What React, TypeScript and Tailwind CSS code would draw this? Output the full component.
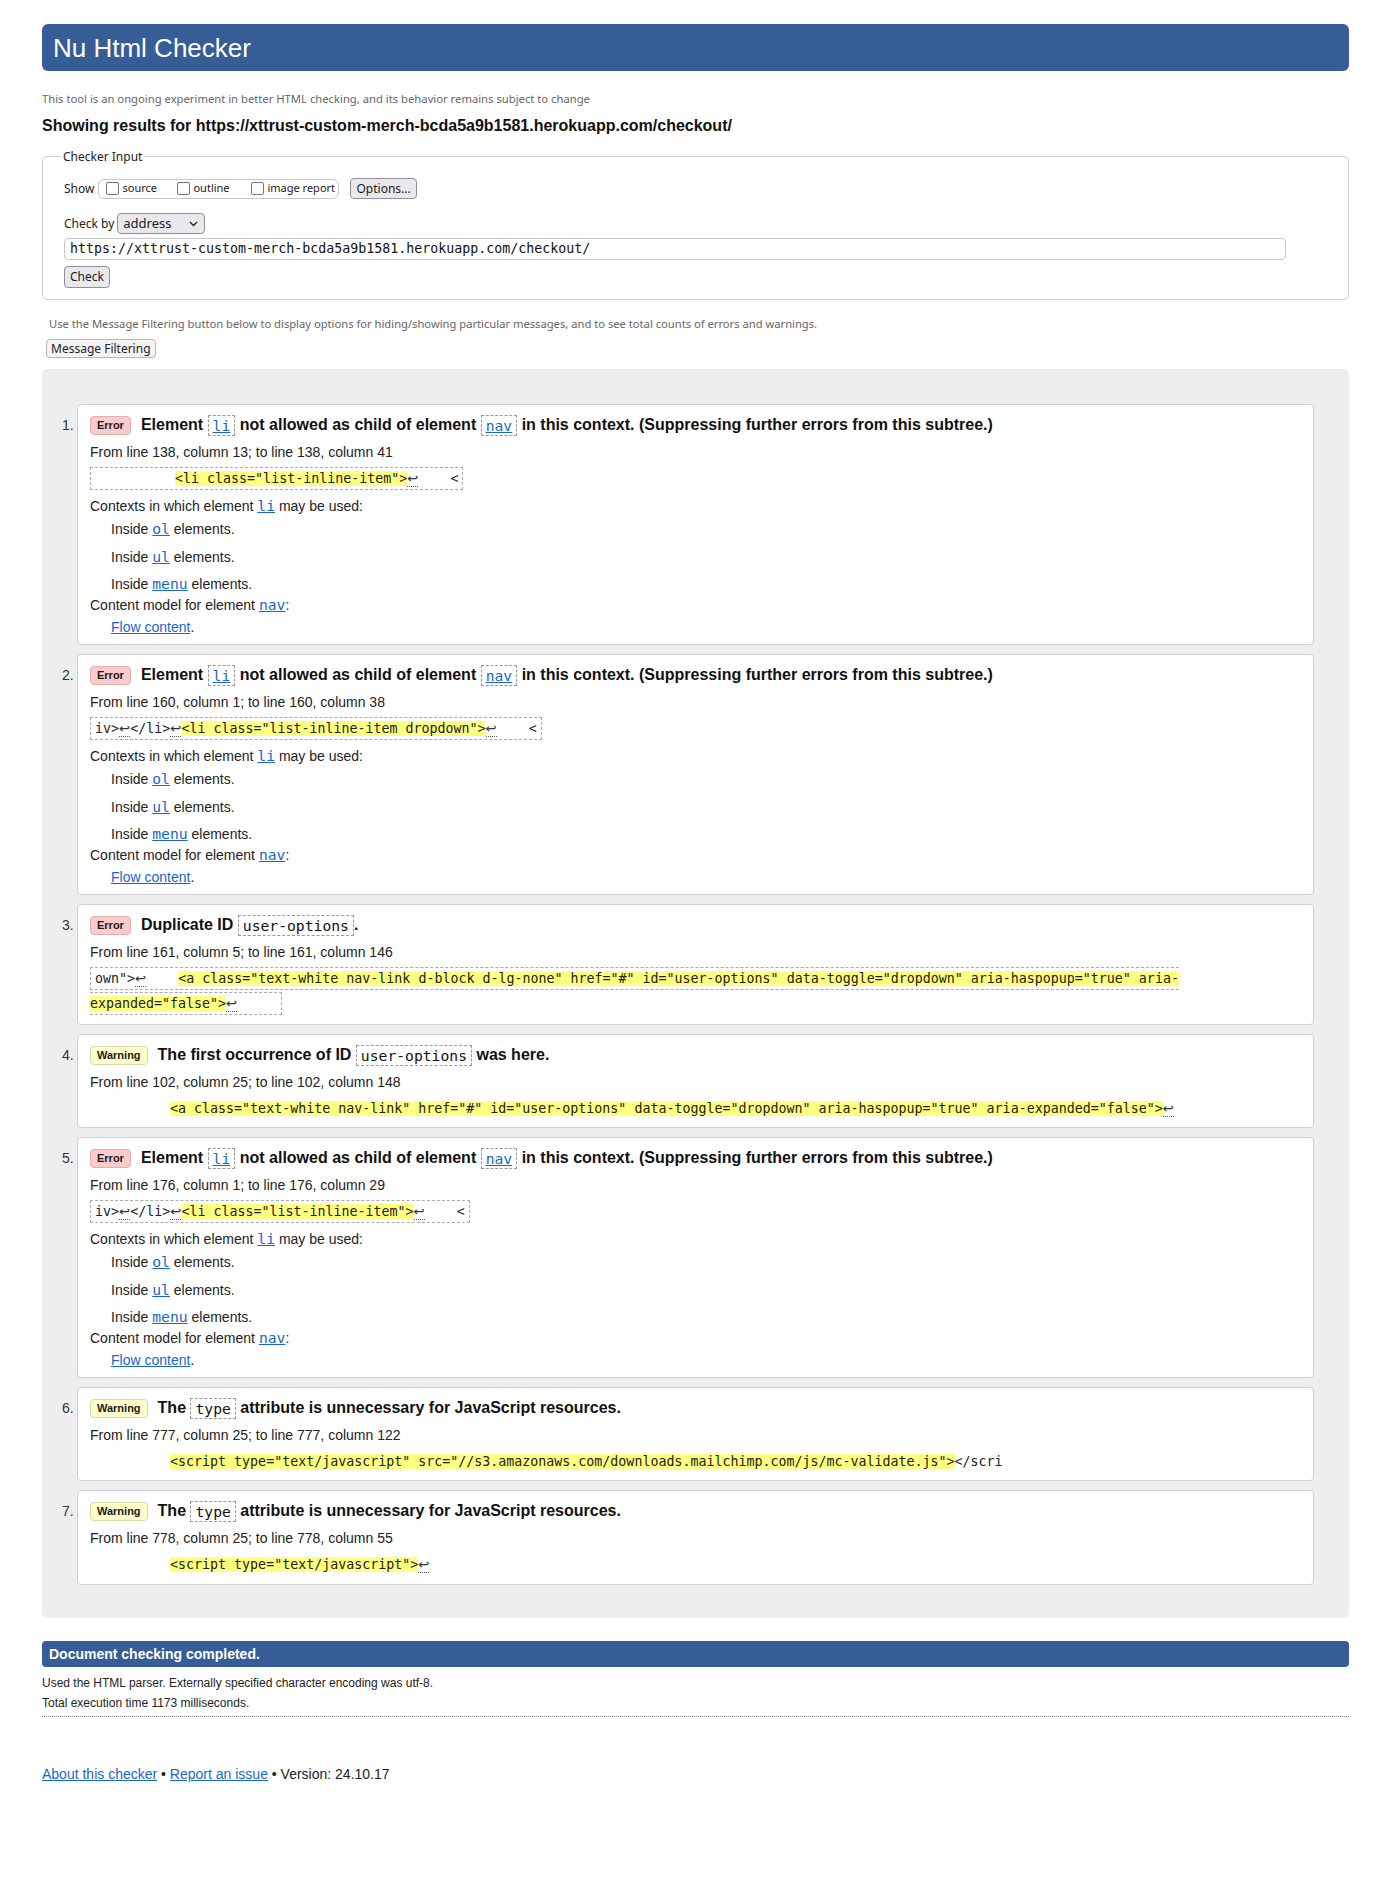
import React from "react";

const MONO = "font-['DejaVu_Sans_Mono',monospace]";
const UI = "font-['Noto_Sans',sans-serif]";

function Lf() {
  return (
    <span className="border-b border-dotted border-[#555] font-['DejaVu_Sans',sans-serif] text-[13.3px] text-[#333]">↩</span>
  );
}

function Hl({ children }: { children: React.ReactNode }) {
  return <span className="bg-[#ffff80]">{children}</span>;
}

function Link({ children, mono }: { children: React.ReactNode; mono?: boolean }) {
  return (
    <a href="#" className={`text-[#1a66cc] underline ${mono ? `${MONO} text-[14.7px]` : ""}`}>
      {children}
    </a>
  );
}

function Tag({ children, link }: { children: string; link?: boolean }) {
  return (
    <span
      className={`${MONO} inline-block border border-dashed border-[#999] px-[4px] py-[1px] align-middle text-[14.7px] font-normal leading-[17px]`}
    >
      {link ? <a href="#" className="text-[#1a66cc] underline">{children}</a> : children}
    </span>
  );
}

function Badge({ kind }: { kind: "Error" | "Warning" }) {
  const c = kind === "Error" ? "bg-[#fbcaca] border-[#e2b0b0]" : "bg-[#ffffcc] border-[#d8d8a8]";
  return (
    <span className={`inline-flex h-[19px] shrink-0 items-center rounded-[4px] border px-[6px] text-[11px] font-bold text-[#1a1a1a] ${c}`}>
      {kind}
    </span>
  );
}

function Msg({
  n,
  kind,
  title,
  pb,
  children,
}: {
  n: number;
  kind: "Error" | "Warning";
  title: React.ReactNode;
  pb: string;
  children: React.ReactNode;
}) {
  return (
    <li className="flex">
      <span className="w-[15px] shrink-0 pt-[13px] text-[14px] leading-[16px] text-[#333]">{n}.</span>
      <div className={`flex-1 rounded-[4px] border border-[#cfcfcf] bg-white px-[12px] pt-[8px] ${pb}`}>
        <div className="flex h-[24px] items-center">
          <Badge kind={kind} />
          <div className="ml-[10px] whitespace-nowrap text-[16px] font-bold text-[#111]">{title}</div>
        </div>
        {children}
      </div>
    </li>
  );
}

function Loc({ children }: { children: React.ReactNode }) {
  return <p className="mt-[6px] leading-[18px]">{children}</p>;
}

function CodeBox({ children }: { children: React.ReactNode }) {
  return (
    <div className="mt-[5px] leading-[24px]">
      <span className={`${MONO} whitespace-pre border border-dashed border-[#aaa] px-[4px] py-[3px] text-[13.3px] text-[#222]`}>
        {children}
      </span>
    </div>
  );
}

function CodeLine({ children }: { children: React.ReactNode }) {
  return (
    <div className="mt-[5px] leading-[24px]">
      <span className={`${MONO} whitespace-pre text-[13.3px] text-[#222]`}>{children}</span>
    </div>
  );
}

function Contexts() {
  return (
    <>
      <p className="mt-[6px] leading-[18px]">
        Contexts in which element <Link mono>li</Link> may be used:
      </p>
      <p className="ml-[21px] mt-[5px] leading-[18px]">
        Inside <Link mono>ol</Link> elements.
      </p>
      <p className="ml-[21px] mt-[10px] leading-[18px]">
        Inside <Link mono>ul</Link> elements.
      </p>
      <p className="ml-[21px] mt-[9px] leading-[18px]">
        Inside <Link mono>menu</Link> elements.
      </p>
      <p className="mt-[3px] leading-[18px]">
        Content model for element <Link mono>nav</Link>:
      </p>
      <p className="ml-[21px] mt-[4px] leading-[18px]">
        <Link>Flow content</Link>.
      </p>
    </>
  );
}

function LiTitle() {
  return (
    <>
      Element <Tag link>li</Tag> not allowed as child of element <Tag link>nav</Tag> in this context. (Suppressing
      further errors from this subtree.)
    </>
  );
}

function TypeTitle() {
  return (
    <>
      The <Tag>type</Tag> attribute is unnecessary for JavaScript resources.
    </>
  );
}

function Checkbox() {
  return <span className="h-[13px] w-[13px] shrink-0 rounded-[2px] border border-[#767676] bg-white" />;
}

export default function App() {
  return (
    <div className="min-h-[1890px] bg-white px-[42px] pt-[24px] font-['Liberation_Sans',Arial,sans-serif] text-[14px] text-[#222]">
      <header className="flex h-[47px] items-center rounded-[6px] bg-[#365d95] pl-[11px] pt-[1px] text-[26px] text-white">
        Nu Html Checker
      </header>

      <p className={`${UI} mt-[20px] text-[11.25px] leading-[15px] text-[#666]`}>
        This tool is an ongoing experiment in better HTML checking, and its behavior remains subject to change
      </p>
      <h2 className="mt-[10px] text-[16px] font-bold leading-[19px] text-[#111]">
        Showing results for https://xttrust-custom-merch-bcda5a9b1581.herokuapp.com/checkout/
      </h2>

      <fieldset className={`${UI} mt-[13px] rounded-[5px] border border-[#cfcfcf] px-[21px] pb-[11px] pt-[13px] text-[12px] text-[#222]`}>
        <legend className="-ml-[3px] px-[2px] text-[12px] leading-[17px]">Checker Input</legend>
        <div className="flex h-[21px] items-center">
          <span>Show</span>
          <div className="ml-[4px] flex h-[20px] w-[241px] items-center rounded-[6px] border border-[#c8c8c8] pl-[7px] text-[11px]">
            <span className="flex w-[71px] items-center">
              <Checkbox />
              <span className="ml-[3px]">source</span>
            </span>
            <span className="flex w-[74px] items-center">
              <Checkbox />
              <span className="ml-[3px]">outline</span>
            </span>
            <span className="flex items-center">
              <Checkbox />
              <span className="ml-[3px]">image report</span>
            </span>
          </div>
          <button className="ml-[11px] h-[21px] rounded-[4px] border border-[#8f8f9d] bg-[#e9e9ed] px-[5px] text-[12px]">
            Options...
          </button>
        </div>
        <div className="mt-[14px] flex h-[21px] items-center">
          <span>Check by</span>
          <div className="ml-[3px] flex h-[21px] w-[88px] items-center justify-between rounded-[4px] border border-[#8f8f9d] bg-[#e9e9ed] pl-[5px] pr-[6px] text-[13px]">
            <span>address</span>
            <svg width="9" height="6" viewBox="0 0 9 6" fill="none" stroke="#222" strokeWidth="1.3">
              <path d="M1 1l3.5 3.5L8 1" />
            </svg>
          </div>
        </div>
        <div
          className={`${MONO} mt-[4px] flex h-[22px] w-[1222px] items-center rounded-[4px] border border-[#c8c8c8] pl-[5px] text-[13.3px] text-[#111]`}
        >
          https://xttrust-custom-merch-bcda5a9b1581.herokuapp.com/checkout/
        </div>
        <button className="mt-[6px] block h-[22px] rounded-[4px] border border-[#8f8f9d] bg-[#e9e9ed] px-[5px] text-[12px]">
          Check
        </button>
      </fieldset>

      <p className={`${UI} ml-[7px] mt-[16px] text-[11.2px] leading-[15px] text-[#666]`}>
        Use the Message Filtering button below to display options for hiding/showing particular messages, and to see
        total counts of errors and warnings.
      </p>
      <button
        className={`${UI} ml-[4px] mt-[8px] block h-[19px] rounded-[4px] border border-[#b5b5b5] bg-[#f4f4f4] px-[4px] text-[12px] leading-[17px]`}
      >
        Message Filtering
      </button>

      <ol className="mt-[11px] flex flex-col gap-[9px] rounded-[5px] bg-[#eeeeee] pb-[33px] pl-[20px] pr-[35px] pt-[35px]">
        <Msg n={1} kind="Error" title={<LiTitle />} pb="pb-[8px]">
          <Loc>From line 138, column 13; to line 138, column 41</Loc>
          <CodeBox>
            {"          "}
            <Hl>{'<li class="list-inline-item">'}</Hl>
            <Lf />
            {"    <"}
          </CodeBox>
          <Contexts />
        </Msg>

        <Msg n={2} kind="Error" title={<LiTitle />} pb="pb-[8px]">
          <Loc>From line 160, column 1; to line 160, column 38</Loc>
          <CodeBox>
            {"iv>"}
            <Lf />
            {"</li>"}
            <Lf />
            <Hl>{'<li class="list-inline-item dropdown">'}</Hl>
            <Lf />
            {"    <"}
          </CodeBox>
          <Contexts />
        </Msg>

        <Msg
          n={3}
          kind="Error"
          title={
            <>
              Duplicate ID <Tag>user-options</Tag>.
            </>
          }
          pb="pb-[8px]"
        >
          <Loc>From line 161, column 5; to line 161, column 146</Loc>
          <CodeBox>
            {'own">'}
            <Lf />
            {"    "}
            <Hl>
              {
                '<a class="text-white nav-link d-block d-lg-none" href="#" id="user-options" data-toggle="dropdown" aria-haspopup="true" aria-\nexpanded="false">'
              }
            </Hl>
            <Lf />
            {"     "}
          </CodeBox>
        </Msg>

        <Msg
          n={4}
          kind="Warning"
          title={
            <>
              The first occurrence of ID <Tag>user-options</Tag> was here.
            </>
          }
          pb="pb-[6px]"
        >
          <Loc>From line 102, column 25; to line 102, column 148</Loc>
          <CodeLine>
            {"          "}
            <Hl>
              {
                '<a class="text-white nav-link" href="#" id="user-options" data-toggle="dropdown" aria-haspopup="true" aria-expanded="false">'
              }
            </Hl>
            <Lf />
          </CodeLine>
        </Msg>

        <Msg n={5} kind="Error" title={<LiTitle />} pb="pb-[8px]">
          <Loc>From line 176, column 1; to line 176, column 29</Loc>
          <CodeBox>
            {"iv>"}
            <Lf />
            {"</li>"}
            <Lf />
            <Hl>{'<li class="list-inline-item">'}</Hl>
            <Lf />
            {"    <"}
          </CodeBox>
          <Contexts />
        </Msg>

        <Msg n={6} kind="Warning" title={<TypeTitle />} pb="pb-[6px]">
          <Loc>From line 777, column 25; to line 777, column 122</Loc>
          <CodeLine>
            {"          "}
            <Hl>{'<script type="text/javascript" src="//s3.amazonaws.com/downloads.mailchimp.com/js/mc-validate.js">'}</Hl>
            {"</scri"}
          </CodeLine>
        </Msg>

        <Msg n={7} kind="Warning" title={<TypeTitle />} pb="pb-[7px]">
          <Loc>From line 778, column 25; to line 778, column 55</Loc>
          <CodeLine>
            {"          "}
            <Hl>{'<script type="text/javascript">'}</Hl>
            <Lf />
          </CodeLine>
        </Msg>
      </ol>

      <div className="mt-[23px] flex h-[26px] items-center rounded-[4px] bg-[#365d95] pl-[7px] text-[14px] font-bold text-white">
        Document checking completed.
      </div>
      <div className="border-b border-dotted border-[#888] pb-[5px] text-[12px] leading-[16px] text-[#222]">
        <p className="mt-[8px]">Used the HTML parser. Externally specified character encoding was utf-8.</p>
        <p className="mt-[4px]">Total execution time 1173 milliseconds.</p>
      </div>

      <p className="mt-[48px] text-[14px] leading-[18px] text-[#222]">
        <Link>About this checker</Link> • <Link>Report an issue</Link> • Version: 24.10.17
      </p>
    </div>
  );
}
